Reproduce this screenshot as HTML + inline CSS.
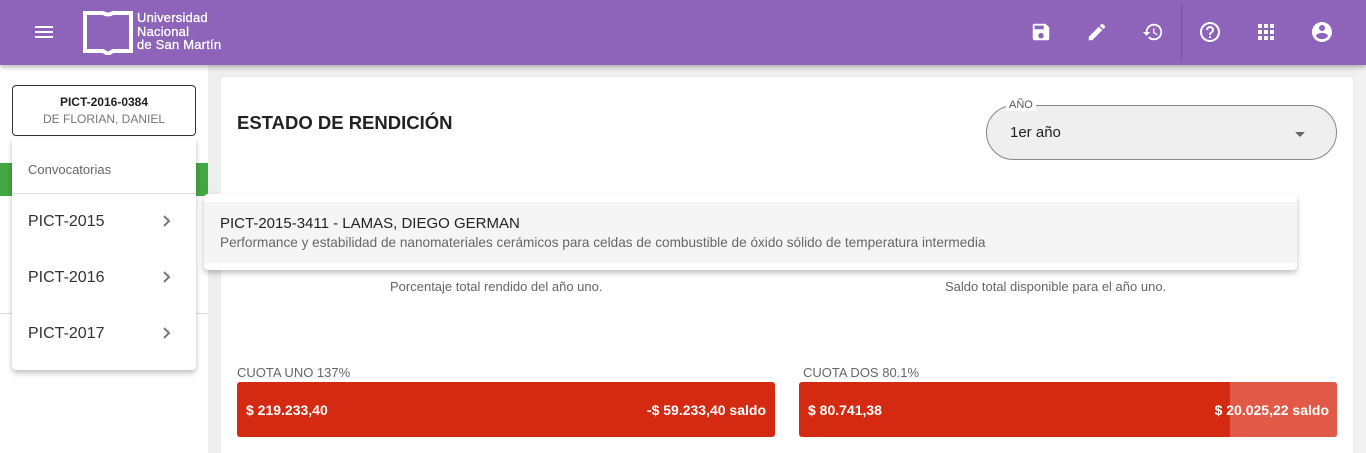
<!DOCTYPE html>
<html><head><meta charset="utf-8"><style>
*{box-sizing:border-box;margin:0;padding:0}
html,body{width:1366px;height:453px;overflow:hidden}
body{background:#eeeeee;font-family:"Liberation Sans",sans-serif;position:relative;color:#212121}
.abs{position:absolute}
#hdr{left:0;top:0;width:1366px;height:65px;background:#8e64ba;box-shadow:0 2px 5px rgba(0,0,0,.3);z-index:5}
#side{left:0;top:65px;width:208px;height:388px;background:#fff}
#card{left:221px;top:77px;width:1132px;height:376px;background:#fff;border-radius:4px 4px 0 0}
.ic{position:absolute;top:21px}
.bar{position:absolute;top:382px;height:55px;background:#d32a11;border-radius:3px;color:#fff;font-weight:bold;font-size:14px}
.bar span{position:absolute;top:20px}
.lbl{position:absolute;top:365px;font-size:13px;color:#666}
.mi{position:absolute;left:28px;font-size:16px;color:#333}
</style></head><body>
<div id="hdr" class="abs">
  <div class="abs" style="left:35px;top:26px;width:18px;height:2px;background:#fff;box-shadow:0 5px 0 #fff,0 10px 0 #fff"></div>
  <svg class="abs" style="left:83px;top:11px" width="50" height="44" viewBox="0 0 50 44"><path d="M2 2 L20 2 Q25 5 30 2 L48 2 L48 40 L30 40 L25 43 L20 40 L2 40 Z" fill="none" stroke="#fff" stroke-width="4"/></svg>
  <div class="abs" style="left:137px;top:11px;color:#fff;font-size:13px;line-height:13.5px;letter-spacing:.2px;-webkit-text-stroke:.3px #fff">Universidad<br>Nacional<br>de San Martín</div>
  <svg class="ic" style="left:1030px" width="22" height="22" viewBox="0 0 24 24"><path fill="#fff" d="M17 3H5a2 2 0 0 0-2 2v14a2 2 0 0 0 2 2h14a2 2 0 0 0 2-2V7l-4-4zm-5 16a3 3 0 1 1 0-6 3 3 0 0 1 0 6zm3-10H5V5h10v4z"/></svg>
  <svg class="ic" style="left:1086px" width="22" height="22" viewBox="0 0 24 24"><path fill="#fff" d="M3 17.25V21h3.75L17.81 9.94l-3.75-3.75L3 17.25zM20.71 7.04a1 1 0 0 0 0-1.41l-2.34-2.34a1 1 0 0 0-1.41 0l-1.83 1.83 3.75 3.75 1.83-1.83z"/></svg>
  <svg class="ic" style="left:1141px" width="24" height="22" viewBox="0 0 24 24"><path fill="#fff" d="M13 3a9 9 0 0 0-9 9H1l3.89 3.89.07.14L9 12H6c0-3.870 3.13-7 7-7s7 3.13 7 7-3.13 7-7 7c-1.93 0-3.68-.79-4.94-2.06l-1.42 1.42A8.95 8.95 0 0 0 13 21a9 9 0 0 0 0-18zm-1 5v5l4.28 2.54.72-1.21-3.5-2.080V8H12z"/></svg>
  <div class="abs" style="left:1181px;top:4px;width:1px;height:57px;background:#7a52a3"></div>
  <svg class="ic" style="left:1198px;top:20px" width="24" height="24" viewBox="0 0 24 24"><path fill="#fff" d="M11 18h2v-2h-2v2zm1-16C6.48 2 2 6.48 2 12s4.48 10 10 10 10-4.48 10-10S17.52 2 12 2zm0 18c-4.41 0-8-3.59-8-8s3.59-8 8-8 8 3.59 8 8-3.59 8-8 8zm0-14a4 4 0 0 0-4 4h2c0-1.1.9-2 2-2s2 .9 2 2c0 2-3 1.75-3 5h2c0-2.25 3-2.5 3-5a4 4 0 0 0-4-4z"/></svg>
  <svg class="ic" style="left:1254px;top:20px" width="24" height="24" viewBox="0 0 24 24"><path fill="#fff" d="M4 8h4V4H4v4zm6 12h4v-4h-4v4zm-6 0h4v-4H4v4zm0-6h4v-4H4v4zm6 0h4v-4h-4v4zm6-10v4h4V4h-4zm-6 4h4V4h-4v4zm6 6h4v-4h-4v4zm0 6h4v-4h-4v4z"/></svg>
  <svg class="ic" style="left:1310px;top:20px" width="24" height="24" viewBox="0 0 24 24"><path fill="#fff" d="M12 2C6.48 2 2 6.48 2 12s4.48 10 10 10 10-4.48 10-10S17.52 2 12 2zm0 3a3 3 0 1 1 0 6 3 3 0 0 1 0-6zm0 14.2a7.2 7.2 0 0 1-6-3.22c.03-1.99 4-3.08 6-3.08 1.99 0 5.970 1.09 6 3.08a7.2 7.2 0 0 1-6 3.22z"/></svg>
</div>
<div id="side" class="abs"></div>
<div class="abs" style="left:0;top:163px;width:208px;height:33px;background:#43a843"></div>
<div class="abs" style="left:0;top:313px;width:208px;height:1px;background:#ddd"></div>
<div class="abs" style="left:1355px;top:65px;width:11px;height:388px;background:#f2f2f2"></div>
<div id="card" class="abs"></div>
<div class="abs" style="left:12px;top:85px;width:184px;height:51px;border:1px solid #333;border-radius:4px;background:#fff;text-align:center">
  <div style="font-size:12px;font-weight:bold;margin-top:9px">PICT-2016-0384</div>
  <div style="font-size:12px;color:#777;margin-top:3px">DE FLORIAN, DANIEL</div>
</div>
<div class="abs" style="left:237px;top:112px;font-size:18.5px;font-weight:bold;color:#222">ESTADO DE RENDICIÓN</div>
<div class="abs" style="left:986px;top:105px;width:351px;height:55px;border:1px solid #888;border-radius:28px;background:#efefef"></div>
<div class="abs" style="left:1006px;top:99px;padding:0 3px;background:#fff;font-size:11px;color:#555;line-height:12px">AÑO</div>
<div class="abs" style="left:1010px;top:124px;font-size:15px;color:#222">1er año</div>
<div class="abs" style="left:1295px;top:132px;border-left:5px solid transparent;border-right:5px solid transparent;border-top:5px solid #666"></div>
<div class="abs" style="left:390px;top:279px;font-size:13px;color:#666">Porcentaje total rendido del año uno.</div>
<div class="abs" style="left:945px;top:279px;font-size:13px;color:#666">Saldo total disponible para el año uno.</div>
<div class="lbl" style="left:237px">CUOTA UNO 137%</div>
<div class="lbl" style="left:803px">CUOTA DOS 80.1%</div>
<div class="bar" style="left:237px;width:538px"><span style="left:9px">$ 219.233,40</span><span style="right:9px">-$ 59.233,40 saldo</span></div>
<div class="bar" style="left:799px;width:538px;overflow:hidden"><div class="abs" style="left:431px;top:0;width:107px;height:55px;background:#e05a47"></div><span style="left:9px">$ 80.741,38</span><span style="right:8px">$ 20.025,22 saldo</span></div>
<div class="abs" style="left:12px;top:138px;width:184px;height:232px;background:#fff;border-radius:0 0 4px 4px;box-shadow:0 3px 6px rgba(0,0,0,.25)">
  <div class="abs" style="left:16px;top:24px;font-size:13px;color:#666">Convocatorias</div>
  <div class="abs" style="left:0;top:55px;width:184px;height:1px;background:#ddd"></div>
  <div class="mi" style="top:75px;left:16px">PICT-2015</div>
  <div class="mi" style="top:131px;left:16px">PICT-2016</div>
  <div class="mi" style="top:187px;left:16px">PICT-2017</div>
  <svg class="abs" style="left:150px;top:76px" width="10" height="14" viewBox="0 0 10 14"><path d="M2 2l5 5-5 5" fill="none" stroke="#777" stroke-width="2"/></svg>
  <svg class="abs" style="left:150px;top:132px" width="10" height="14" viewBox="0 0 10 14"><path d="M2 2l5 5-5 5" fill="none" stroke="#777" stroke-width="2"/></svg>
  <svg class="abs" style="left:150px;top:188px" width="10" height="14" viewBox="0 0 10 14"><path d="M2 2l5 5-5 5" fill="none" stroke="#777" stroke-width="2"/></svg>
</div>
<div class="abs" style="left:204px;top:194px;width:1093px;height:76px;background:#fff;border-radius:4px;box-shadow:0 3px 6px rgba(0,0,0,.25)">
  <div class="abs" style="left:0;top:8px;width:1093px;height:61px;background:#f5f5f5"></div>
  <div class="abs" style="left:16px;top:21px;font-size:15px;color:#222">PICT-2015-3411 - LAMAS, DIEGO GERMAN</div>
  <div class="abs" style="left:16px;top:41px;font-size:13.6px;color:#666">Performance y estabilidad de nanomateriales cerámicos para celdas de combustible de óxido sólido de temperatura intermedia</div>
</div>
</body></html>
